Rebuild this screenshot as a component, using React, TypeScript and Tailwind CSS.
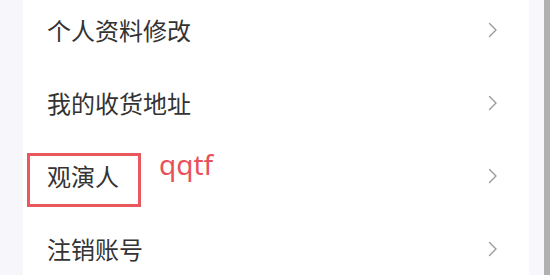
const ITEMS = ['个人资料修改', '我的收货地址', '观演人', '注销账号'];

function Chevron() {
  return (
    <svg width="10" height="16" viewBox="0 0 10 16" fill="none">
      <path d="M1.5 1.5 L8 8 L1.5 14.5" stroke="#9a9a9a" strokeWidth="1.4" strokeLinecap="round" strokeLinejoin="round" />
    </svg>
  );
}

export default function App() {
  return (
    <div className="relative flex w-[550px] h-[275px] overflow-hidden bg-[#f7f7fb]">
      {/* left gutter */}
      <div className="w-[23px] shrink-0" />

      {/* card */}
      <div className="w-[506px] shrink-0 bg-white">
        <ul className="mt-[-7px]">
          {ITEMS.map(label => (
            <li key={label} className="flex items-center justify-between h-[73px] pl-[24px] pr-[31px]">
              <span
                className="text-[24px] leading-none text-[#333]"
                style={{ fontFamily: '"Noto Sans CJK SC", "Noto Sans", sans-serif' }}
              >
                {label}
              </span>
              <Chevron />
            </li>
          ))}
        </ul>
      </div>

      {/* right gutter + scrollbar */}
      <div className="w-[15px] shrink-0 bg-[#f8f8fc]" />
      <div className="w-[6px] shrink-0 bg-[#b1b1b1]" />

      {/* annotation */}
      <div className="absolute left-[27px] top-[153px] w-[114px] h-[54px] border-[3px] border-[#e8585d]" />
      <span
        className="absolute left-[159px] top-[150px] text-[28px] leading-none text-[#e8505a]"
        style={{ fontFamily: '"Noto Sans", sans-serif' }}
      >
        qqtf
      </span>
    </div>
  );
}
